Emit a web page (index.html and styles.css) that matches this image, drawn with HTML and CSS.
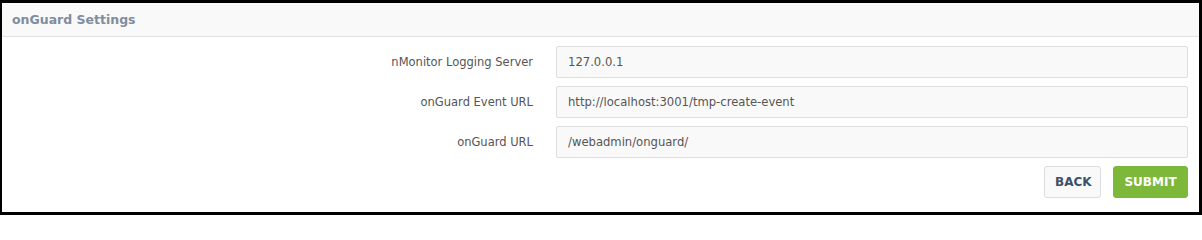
FILE: index.html
```html
<!DOCTYPE html>
<html>
<head>
<meta charset="utf-8">
<link rel="stylesheet" href="styles.css">
</head>
<body>
<div class="frame">
  <div class="panel-head">onGuard Settings</div>
  <form class="panel-body">
    <div class="row">
      <label class="lbl">nMonitor Logging Server</label>
      <input class="field" type="text" value="127.0.0.1">
    </div>
    <div class="row">
      <label class="lbl">onGuard Event URL</label>
      <input class="field" type="text" value="http://localhost:3001/tmp-create-event">
    </div>
    <div class="row">
      <label class="lbl">onGuard URL</label>
      <input class="field" type="text" value="/webadmin/onguard/">
    </div>
    <div class="actions">
      <button type="button" class="btn btn-back">BACK</button>
      <button type="button" class="btn btn-submit">SUBMIT</button>
    </div>
  </form>
</div>
</body>
</html>
```

FILE: styles.css
```css
html, body {
  margin: 0;
  padding: 0;
  background: #fff;
}
.frame {
  box-sizing: border-box;
  width: 1202px;
  height: 215px;
  border-style: solid;
  border-color: #000;
  border-width: 3px 3px 3px 2px;
  background: #fff;
  font-family: "DejaVu Sans", Verdana, sans-serif;
}
.panel-head {
  height: 33px;
  line-height: 34px;
  background: #f9f9f9;
  border-bottom: 1px solid #e2e2e2;
  padding-left: 10px;
  font-weight: bold;
  font-size: 12.5px;
  color: #7f8da0;
}
.panel-body {
  margin: 0;
  padding: 9px 11px 0 0;
  display: flex;
  flex-direction: column;
  gap: 8px;
}
.row {
  display: grid;
  grid-template-columns: 531px 1fr;
  column-gap: 23px;
  align-items: center;
}
.lbl {
  text-align: right;
  font-size: 11.5px;
  color: #555;
}
.field {
  box-sizing: border-box;
  height: 32px;
  width: 100%;
  margin: 0;
  padding: 0 11px;
  border: 1px solid #dedede;
  border-radius: 2px;
  background: #f9f9f9;
  font-family: "DejaVu Sans", Verdana, sans-serif;
  font-size: 11.6px;
  color: #555;
  outline: none;
}
.actions {
  display: flex;
  justify-content: flex-end;
  gap: 12px;
}
.btn {
  box-sizing: border-box;
  height: 32px;
  margin: 0;
  padding: 0 10px;
  border-radius: 3px;
  font-family: "DejaVu Sans", Verdana, sans-serif;
  font-weight: bold;
  font-size: 12px;
  cursor: pointer;
}
.btn-back {
  width: 57px;
  background: #f9f9f9;
  border: 1px solid #dcdcdc;
  color: #3f5064;
}
.btn-submit {
  width: 75px;
  background: #7db83a;
  border: 1px solid #7db83a;
  color: #fff;
}
```
